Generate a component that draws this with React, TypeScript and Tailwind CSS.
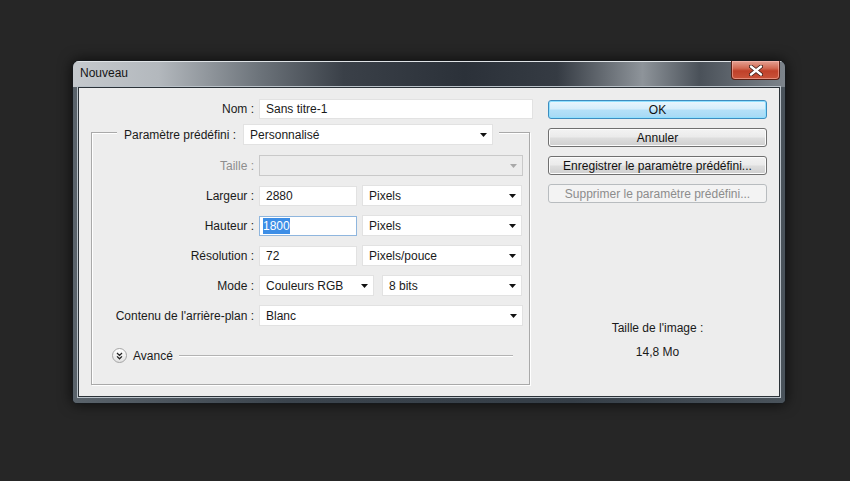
import React from "react";

const Arrow = ({ disabled = false }: { disabled?: boolean }) => (
  <svg width="7" height="4" viewBox="0 0 7 4" className="shrink-0">
    <path d="M0 0 H7 L3.5 4 Z" fill={disabled ? "#a8a8a8" : "#111"} />
  </svg>
);

const Select = ({
  w,
  text,
  disabled = false,
}: {
  w: string;
  text?: string;
  disabled?: boolean;
}) => (
  <div
    className={`${w} h-[21px] flex items-center justify-between pl-[6px] pr-[5px] border ${
      disabled ? "bg-[#ececec] border-[#c9c9c9]" : "bg-white border-[#e2e2e2]"
    }`}
  >
    <span className="text-[12px] text-[#1a1a1a] leading-none">{text}</span>
    <Arrow disabled={disabled} />
  </div>
);

const Input = ({ w, children, focused = false }: { w: string; children: React.ReactNode; focused?: boolean }) => (
  <div
    className={`${w} h-[20px] flex items-center pl-[3px] border bg-white ${
      focused ? "border-[#8fb6de]" : "border-[#e2e2e2]"
    } text-[12px] text-[#1a1a1a]`}
  >
    {children}
  </div>
);

const Label = ({ children, disabled = false }: { children: React.ReactNode; disabled?: boolean }) => (
  <div className={`w-[162px] text-right text-[12px] ${disabled ? "text-[#8e8e8e]" : "text-[#1a1a1a]"}`}>{children}</div>
);

const Row = ({ children }: { children: React.ReactNode }) => (
  <div className="flex items-center h-[21px] gap-[5px]">{children}</div>
);

const Btn = ({ children, variant = "normal" }: { children: React.ReactNode; variant?: "ok" | "normal" | "disabled" }) => {
  const cls =
    variant === "ok"
      ? "border-[#3d8dc0] bg-[linear-gradient(to_bottom,#e9f6fd_0%,#d6eefb_45%,#b4e0f8_55%,#a6d9f5_100%)] shadow-[inset_0_0_0_1px_#8fe0ff] text-[#111]"
      : variant === "disabled"
      ? "border-[#b8bcbf] bg-[#f3f3f3] text-[#8c8c8c]"
      : "border-[#707070] bg-[linear-gradient(to_bottom,#f3f3f3_0%,#ebebeb_45%,#dddddd_55%,#cfcfcf_100%)] shadow-[inset_0_0_0_1px_#fcfcfc] text-[#111]";
  return (
    <div className={`w-[219px] h-[19px] rounded-[3px] border flex items-center justify-center text-[12px] leading-none ${cls}`}>
      {children}
    </div>
  );
};

export default function App() {
  return (
    <div
      className="w-[850px] h-[481px] bg-[#262626] pt-[60px] pl-[72px] overflow-hidden"
      style={{ fontFamily: '"Liberation Sans", Arial, sans-serif' }}
    >
      <div className="w-[714px] h-[344px] rounded-t-[7px] rounded-b-[5px] border border-[#16191c] bg-[#3a434c] shadow-[0_0_14px_rgba(0,0,0,0.7)] flex flex-col overflow-hidden">
        {/* title bar */}
        <div className="h-[26px] shrink-0 flex items-start justify-between bg-[linear-gradient(to_right,#c5c9cd_0%,#b3b8bd_12%,#6d747b_26%,#3a4048_38%,#2b3139_55%,#353b43_68%,#8e949a_80%,#4a5159_88%,#7d848b_100%)] shadow-[inset_0_1px_0_#dfe3e6]">
          <span className="ml-[7px] mt-[6px] text-[12px] text-[#151515] leading-none">Nouveau</span>
          <div className="mr-[5px] w-[49px] h-[19px] rounded-b-[4px] border border-t-0 border-[#5a1f14] bg-[linear-gradient(to_bottom,#e5a193_0%,#d26a53_40%,#c0412a_55%,#c9533a_100%)] shadow-[inset_0_0_0_1px_rgba(255,200,190,0.5)] flex items-center justify-center">
            <svg width="14" height="11" viewBox="0 0 14 11">
              <path d="M2 1.5 L12 9.5 M12 1.5 L2 9.5" stroke="#3a1a14" strokeWidth="4" strokeLinecap="round" />
              <path d="M2 1.5 L12 9.5 M12 1.5 L2 9.5" stroke="#ffffff" strokeWidth="2.4" strokeLinecap="round" />
            </svg>
          </div>
        </div>
        {/* frame body */}
        <div className="flex-1 px-[5px] pb-[6px] bg-[linear-gradient(to_right,#5a636b_0%,#3b444d_30%,#353e47_70%,#4a535b_100%)]">
          <div className="h-full bg-[#ededed] border border-[#2b3238] shadow-[0_0_0_1px_#b9c1c8] flex">
            {/* left column */}
            <div className="w-[469px] pl-[12px] pt-[11px]">
              <div className="flex items-center h-[20px] gap-[5px]">
                <div className="w-[163px] text-right text-[12px] text-[#1a1a1a]">Nom :</div>
                <Input w="w-[274px]">
                  <span className="pl-[3px]">Sans titre-1</span>
                </Input>
              </div>
              {/* group box */}
              <div className="mt-[13px] w-[439px] h-[253px] border border-[#a9a9a9] shadow-[inset_1px_1px_0_#ffffff,1px_1px_0_#ffffff] flex flex-col">
                <div className="-mt-[9px] ml-[25px] w-[382px] pl-[7px] pr-[4px] bg-[#ededed] flex items-center gap-[7px] h-[21px]">
                  <div className="text-[12px] text-[#1a1a1a] whitespace-nowrap">Paramètre prédéfini :</div>
                  <Select w="w-[250px]" text="Personnalisé" />
                </div>
                <div className="mt-[10px] flex flex-col gap-[9px]">
                  <Row>
                    <Label disabled>Taille :</Label>
                    <Select w="w-[264px]" disabled />
                  </Row>
                  <Row>
                    <Label>Largeur :</Label>
                    <Input w="w-[98px]">
                      <span className="pl-[3px]">2880</span>
                    </Input>
                    <Select w="w-[160px]" text="Pixels" />
                  </Row>
                  <Row>
                    <Label>Hauteur :</Label>
                    <Input w="w-[98px]" focused>
                      <span className="bg-[#3d8ee6] text-white h-[16px] flex items-center">1800</span>
                    </Input>
                    <Select w="w-[160px]" text="Pixels" />
                  </Row>
                  <Row>
                    <Label>Résolution :</Label>
                    <Input w="w-[98px]">
                      <span className="pl-[3px]">72</span>
                    </Input>
                    <Select w="w-[160px]" text="Pixels/pouce" />
                  </Row>
                  <Row>
                    <Label>Mode :</Label>
                    <Select w="w-[115px]" text="Couleurs RGB" />
                    <div className="ml-[3px]">
                      <Select w="w-[140px]" text="8 bits" />
                    </div>
                  </Row>
                  <Row>
                    <Label>Contenu de l&apos;arrière-plan :</Label>
                    <Select w="w-[264px]" text="Blanc" />
                  </Row>
                </div>
                <div className="mt-[22px] ml-[20px] mr-[16px] flex items-center h-[15px]">
                  <div className="w-[15px] h-[15px] rounded-full border border-[#a5a5a5] bg-[linear-gradient(to_bottom,#ffffff,#e2e2e2)] flex items-center justify-center shrink-0">
                    <svg width="7" height="8" viewBox="0 0 7 8">
                      <path d="M1 1 L3.5 3.4 L6 1 M1 4.4 L3.5 6.8 L6 4.4" stroke="#222" strokeWidth="1.3" fill="none" />
                    </svg>
                  </div>
                  <span className="ml-[6px] text-[12px] text-[#1a1a1a]">Avancé</span>
                  <div className="ml-[6px] flex-1 h-[1px] bg-[#b3b3b3] shadow-[0_1px_0_#ffffff]" />
                </div>
              </div>
            </div>
            {/* right column */}
            <div className="w-[219px] pt-[12px] flex flex-col">
              <div className="flex flex-col gap-[9px]">
                <Btn variant="ok">OK</Btn>
                <Btn>Annuler</Btn>
                <Btn>Enregistrer le paramètre prédéfini...</Btn>
                <Btn variant="disabled">Supprimer le paramètre prédéfini...</Btn>
              </div>
              <div className="mt-[116px] text-center text-[12px] text-[#1a1a1a]">Taille de l&apos;image :</div>
              <div className="mt-[6px] text-center text-[12px] text-[#1a1a1a]">14,8 Mo</div>
            </div>
          </div>
        </div>
      </div>
    </div>
  );
}
